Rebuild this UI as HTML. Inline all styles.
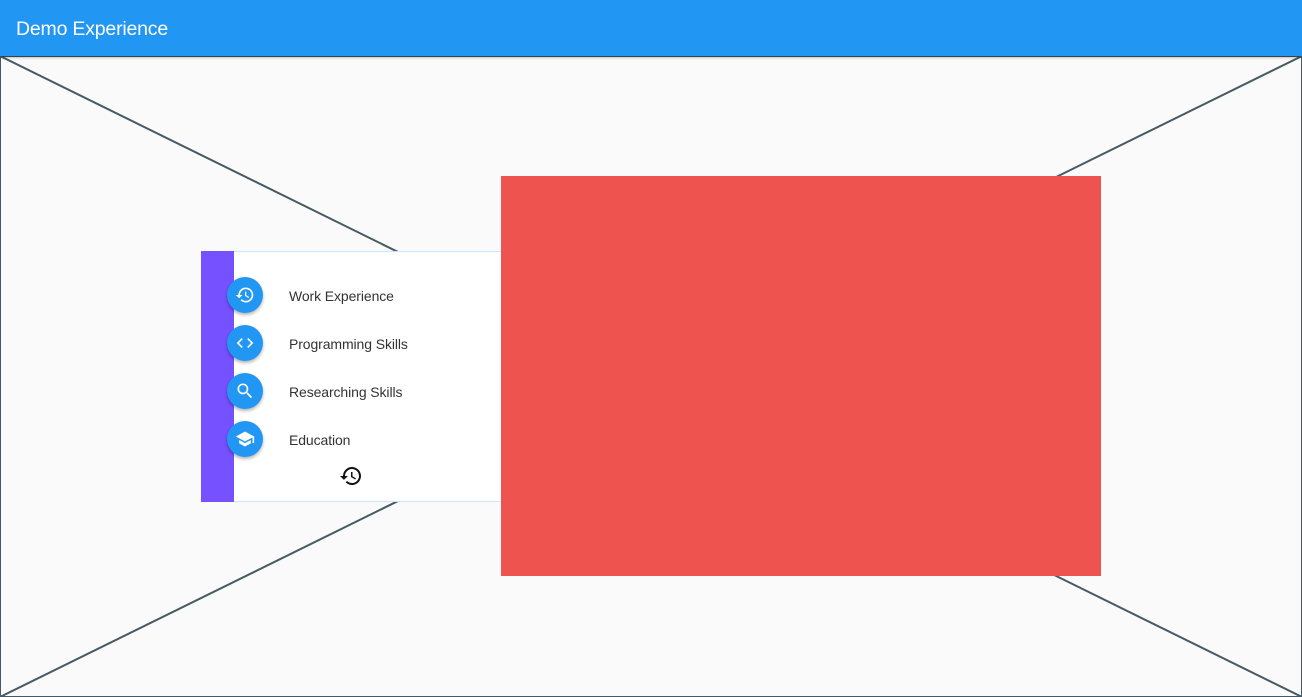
<!DOCTYPE html>
<html><head><style>
body{margin:0;width:1302px;height:697px;overflow:hidden;background:#fafafa;font-family:"Liberation Sans",Roboto,sans-serif;position:relative}
.bar{position:absolute;left:0;top:0;width:1302px;height:56px;background:#2196f3;box-shadow:0 1px 3px rgba(0,0,0,.4);z-index:3}
.bar span{position:absolute;left:16px;top:18px;color:#fff;font-size:19.5px;letter-spacing:-0.2px}
svg.bg{position:absolute;left:0;top:56px}
.panel{position:absolute;left:201px;top:251px;width:300px;height:251px;background:#fff;border-top:1px solid #cde6fb;border-bottom:1px solid #cde6fb;box-sizing:border-box}
.purple{position:absolute;left:201px;top:251px;width:33px;height:251px;background:#7551ff}
.red{position:absolute;left:501px;top:176px;width:600px;height:400px;background:#ef5350}
.c{position:absolute;left:227px;width:36px;height:36px;border-radius:50%;background:#2196f3;box-shadow:0 2px 3px rgba(0,0,0,.3);display:flex;align-items:center;justify-content:center}
.t{position:absolute;left:289px;font-size:14px;color:#333;letter-spacing:-0.1px}
</style></head><body>
<div class="bar"><span>Demo Experience</span></div>
<svg class="bg" width="1302" height="641"><rect x="0.5" y="0.5" width="1301" height="640" fill="none" stroke="#455a64"/><line x1="0" y1="0" x2="1302" y2="641" stroke="#455a64" stroke-width="2"/><line x1="1302" y1="0" x2="0" y2="641" stroke="#455a64" stroke-width="2"/></svg>
<div class="panel"></div>
<div class="purple"></div>
<div class="red"></div>
<div class="c" style="top:277px"><svg width="20" height="20" viewBox="0 0 24 24"><path fill="#fff" d="M13 3a9 9 0 0 0-9 9H1l3.9 3.9L9 12H6a7 7 0 1 1 2.05 4.95l-1.42 1.42A9 9 0 1 0 13 3zm-1 5v5l4.28 2.54.72-1.21-3.5-2.08V8H12z"/></svg></div>
<div class="c" style="top:325px"><svg width="20" height="20" viewBox="0 0 24 24"><path fill="#fff" d="M9.4 16.6L4.8 12l4.6-4.6L8 6l-6 6 6 6 1.4-1.4zm5.2 0l4.6-4.6-4.6-4.6L16 6l6 6-6 6-1.4-1.4z"/></svg></div>
<div class="c" style="top:373px"><svg width="20" height="20" viewBox="0 0 24 24"><path fill="#fff" d="M15.5 14h-.79l-.28-.27A6.47 6.47 0 0 0 16 9.5 6.5 6.5 0 1 0 9.5 16c1.61 0 3.09-.59 4.23-1.57l.27.28v.79l5 4.99L20.49 19l-4.99-5zm-6 0C7.01 14 5 11.99 5 9.5S7.01 5 9.5 5 14 7.01 14 9.5 11.99 14 9.5 14z"/></svg></div>
<div class="c" style="top:421px"><svg width="20" height="20" viewBox="0 0 24 24"><path fill="#fff" d="M5 13.18v4L12 21l7-3.82v-4L12 17l-7-3.82zM12 3L1 9l11 6 9-4.91V17h2V9L12 3z"/></svg></div>
<div class="t" style="top:288px">Work Experience</div>
<div class="t" style="top:336px">Programming Skills</div>
<div class="t" style="top:384px">Researching Skills</div>
<div class="t" style="top:432px">Education</div>
<svg style="position:absolute;left:339px;top:464px" width="24" height="24" viewBox="0 0 24 24"><path fill="#111" d="M13 3a9 9 0 0 0-9 9H1l3.9 3.9L9 12H6a7 7 0 1 1 2.05 4.95l-1.42 1.42A9 9 0 1 0 13 3zm-1 5v5l4.28 2.54.72-1.21-3.5-2.08V8H12z"/></svg>
</body></html>
